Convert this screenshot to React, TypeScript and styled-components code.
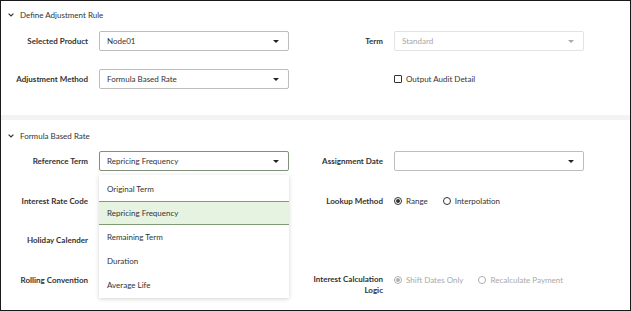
import React from "react";
import styled, { createGlobalStyle } from "styled-components";

const Global = createGlobalStyle`
  html, body { margin: 0; padding: 0; background: #fff; }
  body { font-family: "Lato", "Noto Sans", sans-serif; color: #333; }
  * { box-sizing: border-box; }
`;

const Frame = styled.div`
  width: 631px;
  height: 311px;
  border: 1px solid #1a1a1a;
  overflow: hidden;
  position: relative;
  background: #fff;
`;

const Section = styled.section<{ $pt: number; $pb?: number }>`
  padding-top: ${(p) => p.$pt}px;
  padding-bottom: ${(p) => p.$pb ?? 0}px;
`;

const Divider = styled.div`
  height: 5px;
  background: #f3f3f3;
`;

const Header = styled.div`
  display: flex;
  align-items: center;
  gap: 6px;
  height: 14px;
  padding-left: 7px;
  font-size: 8px;
  color: #333;
`;

const Grid = styled.div<{ $mt: number; $gap: number }>`
  margin-top: ${(p) => p.$mt}px;
  display: grid;
  grid-template-columns: 98px 190px 105px 190px;
  grid-auto-rows: 20px;
  row-gap: ${(p) => p.$gap}px;
`;

const Label = styled.div<{ $multi?: boolean }>`
  font-size: 8px;
  font-weight: 700;
  color: #333;
  text-align: right;
  padding-right: 11px;
  display: flex;
  justify-content: flex-end;
  align-items: ${(p) => (p.$multi ? "flex-start" : "center")};
  line-height: ${(p) => (p.$multi ? "11px" : "20px")};
  padding-top: ${(p) => (p.$multi ? 4 : 0)}px;
`;

const Field = styled.div`
  position: relative;
  display: flex;
  align-items: center;
`;

const SelectBox = styled.div<{ $disabled?: boolean; $focus?: boolean }>`
  width: 190px;
  height: 20px;
  border: 1px solid
    ${(p) => (p.$disabled ? "#e3e3e3" : p.$focus ? "#7f907a" : "#bdbdbd")};
  border-radius: 2px;
  display: flex;
  align-items: center;
  padding: 0 7px;
  font-size: 8px;
  color: ${(p) => (p.$disabled ? "#a6a6a6" : "#333")};
  background: #fff;
`;

const SelectText = styled.span`
  flex: 1;
`;

const Arrow = styled.span<{ $disabled?: boolean }>`
  width: 0;
  height: 0;
  border-left: 3px solid transparent;
  border-right: 3px solid transparent;
  border-top: 3px solid ${(p) => (p.$disabled ? "#aaa" : "#222")};
  margin-right: 2px;
`;

const Check = styled.span`
  width: 8px;
  height: 8px;
  border: 1px solid #333;
  border-radius: 1px;
  display: inline-block;
`;

const InlineOption = styled.label<{ $disabled?: boolean }>`
  display: inline-flex;
  align-items: center;
  gap: 4px;
  font-size: 8px;
  color: ${(p) => (p.$disabled ? "#a8a8a8" : "#333")};
  margin-right: 15px;
  white-space: nowrap;
`;

const Radio = styled.span<{ $checked?: boolean; $disabled?: boolean }>`
  width: 8px;
  height: 8px;
  border-radius: 50%;
  border: 1px solid ${(p) => (p.$disabled ? "#b0b0b0" : "#333")};
  display: inline-flex;
  align-items: center;
  justify-content: center;
  &::after {
    content: "";
    display: ${(p) => (p.$checked ? "block" : "none")};
    width: 4px;
    height: 4px;
    border-radius: 50%;
    background: ${(p) => (p.$disabled ? "#b0b0b0" : "#333")};
  }
`;

const Options = styled.div`
  display: flex;
  align-items: center;
`;

const Menu = styled.ul`
  position: absolute;
  top: 24px;
  left: 0;
  width: 190px;
  margin: 0;
  padding: 2px 0 1px;
  list-style: none;
  background: #fff;
  box-shadow: 0 1px 4px rgba(0, 0, 0, 0.18);
  z-index: 5;
`;

const MenuItem = styled.li<{ $active?: boolean }>`
  height: 24px;
  display: flex;
  align-items: center;
  padding-left: 8px;
  font-size: 8px;
  color: #333;
  background: ${(p) => (p.$active ? "#e6f3e1" : "transparent")};
  border-top: 1px solid ${(p) => (p.$active ? "#7e9b73" : "transparent")};
  border-bottom: 1px solid ${(p) => (p.$active ? "#7e9b73" : "transparent")};
`;

const Chevron = () => (
  <svg width="6" height="4" viewBox="0 0 6 4">
    <path d="M0.6 0.6 L3 3 L5.4 0.6" fill="none" stroke="#333" strokeWidth="1.2" />
  </svg>
);

const Select = ({
  value,
  disabled,
  focus,
}: {
  value: string;
  disabled?: boolean;
  focus?: boolean;
}) => (
  <SelectBox $disabled={disabled} $focus={focus}>
    <SelectText>{value}</SelectText>
    <Arrow $disabled={disabled} />
  </SelectBox>
);

const menuItems = [
  "Original Term",
  "Repricing Frequency",
  "Remaining Term",
  "Duration",
  "Average Life",
];

export default function App() {
  return (
    <Frame>
      <Global />
      <Section $pt={7} $pb={26}>
        <Header>
          <Chevron />
          <span>Define Adjustment Rule</span>
        </Header>
        <Grid $mt={9} $gap={18}>
          <Label>Selected Product</Label>
          <Field>
            <Select value="Node01" />
          </Field>
          <Label>Term</Label>
          <Field>
            <Select value="Standard" disabled />
          </Field>

          <Label>Adjustment Method</Label>
          <Field>
            <Select value="Formula Based Rate" />
          </Field>
          <div />
          <Field>
            <InlineOption>
              <Check />
              Output Audit Detail
            </InlineOption>
          </Field>
        </Grid>
      </Section>
      <Divider />
      <Section $pt={9}>
        <Header>
          <Chevron />
          <span>Formula Based Rate</span>
        </Header>
        <Grid $mt={8} $gap={19.5}>
          <Label>Reference Term</Label>
          <Field>
            <Select value="Repricing Frequency" focus />
            <Menu>
              {menuItems.map((m) => (
                <MenuItem key={m} $active={m === "Repricing Frequency"}>
                  {m}
                </MenuItem>
              ))}
            </Menu>
          </Field>
          <Label>Assignment Date</Label>
          <Field>
            <Select value="" />
          </Field>

          <Label>Interest Rate Code</Label>
          <Field />
          <Label>Lookup Method</Label>
          <Field>
            <Options>
              <InlineOption>
                <Radio $checked />
                Range
              </InlineOption>
              <InlineOption>
                <Radio />
                Interpolation
              </InlineOption>
            </Options>
          </Field>

          <Label>Holiday Calender</Label>
          <Field />
          <div />
          <div />

          <Label>Rolling Convention</Label>
          <Field />
          <Label $multi>
            Interest Calculation
            <br />
            Logic
          </Label>
          <Field>
            <Options>
              <InlineOption $disabled>
                <Radio $checked $disabled />
                Shift Dates Only
              </InlineOption>
              <InlineOption $disabled>
                <Radio $disabled />
                Recalculate Payment
              </InlineOption>
            </Options>
          </Field>
        </Grid>
      </Section>
    </Frame>
  );
}
